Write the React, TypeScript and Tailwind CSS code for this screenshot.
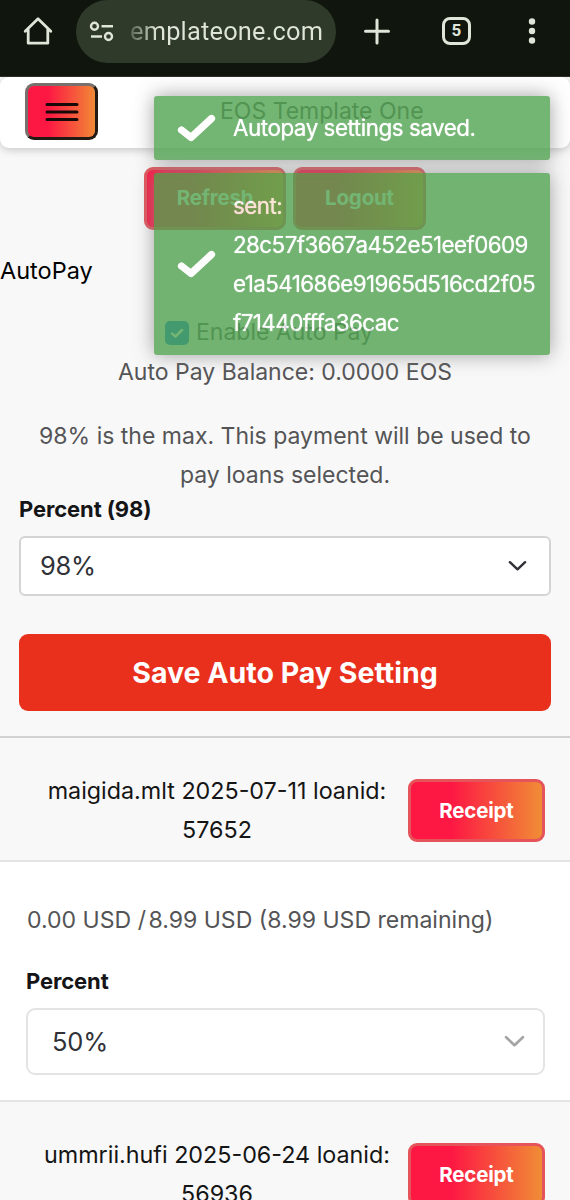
import type { ReactNode } from "react";
import clsx from "clsx";

type Loan = {
  account: string;
  date: string;
  loanId: string;
};

const loans: Loan[] = [
  { account: "maigida.mlt", date: "2025-07-11", loanId: "57652" },
  { account: "ummrii.hufi", date: "2025-06-24", loanId: "56936" },
];

function BrowserBar() {
  return (
    <div className="flex h-[77px] shrink-0 items-start border-b border-[#332e29] bg-[#10150d] text-[#dfe5d8]">
      <svg className="mt-[15px] ml-[22px] size-8 shrink-0" viewBox="0 0 32 32" fill="none" stroke="currentColor" strokeWidth="2.8" strokeLinecap="round" strokeLinejoin="round">
        <path d="M3.200 16.200 16 3.800 28.800 16.200M6.200 14v14.200h19.600V14" />
      </svg>
      <div className="ml-[22px] flex h-[63px] w-[260px] shrink-0 items-center rounded-[32px] bg-[#2f3a2b]">
        <svg className="ml-3 h-6 w-7 shrink-0" viewBox="0 0 28 24" fill="none" stroke="currentColor" strokeWidth="2.4">
          <circle cx="6.500" cy="6.300" r="3.500" />
          <path d="M13.500 6.300H25M3 16.500H14" />
          <circle cx="20.500" cy="16.500" r="3.500" />
        </svg>
        <span className="ml-[14px] whitespace-nowrap bg-linear-to-r from-[#5b6555] to-[#dfe5d8] to-[14%] bg-clip-text font-['Roboto',sans-serif] text-[25.400px] tracking-[0.200px] text-transparent">
          emplateone.com
        </span>
      </div>
      <svg className="mt-[17px] ml-[27px] size-7 shrink-0" viewBox="0 0 28 28" fill="none" stroke="currentColor" strokeWidth="3" strokeLinecap="round">
        <path d="M14 3v23M2.500 14.200h23" />
      </svg>
      <div className="mt-[17px] ml-[51px] flex h-[28px] w-[29px] shrink-0 items-center justify-center rounded-[8px] border-[3px] border-[#dfe5d8] font-['Roboto',sans-serif] text-[17px] font-bold">
        5
      </div>
      <svg className="mt-[17px] ml-[57px] h-7 w-2 shrink-0" viewBox="0 0 8 28" fill="currentColor">
        <circle cx="4" cy="4.500" r="3.200" />
        <circle cx="4" cy="14" r="3.200" />
        <circle cx="4" cy="23.500" r="3.200" />
      </svg>
    </div>
  );
}

function GradientButton({ children, className }: { children: ReactNode; className?: string }) {
  return (
    <button
      className={clsx(
        "h-[63px] shrink-0 rounded-[9px] border-[3px] border-[#e4545a] bg-linear-to-r/srgb from-[#fd1843] from-32% to-[#f09035] bg-origin-border text-[20.500px] font-bold tracking-[-0.200px] text-white",
        className,
      )}
    >
      {children}
    </button>
  );
}

function Chevron({ className }: { className?: string }) {
  return (
    <svg className={className} viewBox="0 0 20 12" fill="none" stroke="currentColor" strokeWidth="2.6" strokeLinecap="round" strokeLinejoin="round">
      <path d="M2 2l8 7.500L18 2" />
    </svg>
  );
}

function Toast({ children, className }: { children: ReactNode; className?: string }) {
  return (
    <div
      className={clsx(
        "flex w-[396px] items-center rounded-[3px] bg-[#51a351] pl-[22px] text-[22.400px] leading-[39.200px] text-white opacity-80 shadow-[0_0_20px_#888]",
        className,
      )}
    >
      <svg className="mr-[17px] h-[31px] w-10 shrink-0" viewBox="0 0 40 31" fill="none" stroke="#fff" strokeWidth="7.200" strokeLinecap="round" strokeLinejoin="round">
        <path d="M5.500 17 15 24.500 35.500 5.500" />
      </svg>
      <div className="shrink-0 whitespace-nowrap [text-shadow:0_0_1px_#fff]">{children}</div>
    </div>
  );
}

function LoanHeader({ loan }: { loan: Loan }) {
  return (
    <div className="flex h-[124px] items-start border-b-2 border-[#e4e4e5] bg-[#f8f8f8] pr-[25px]">
      <p className="mt-[33px] ml-[26px] w-[382px] text-center text-[23.300px] leading-[39px] text-[#151515]">
        {loan.account} {loan.date} loanid:
        <br />
        {loan.loanId}
      </p>
      <GradientButton className="mt-[41px] w-[137px]">Receipt</GradientButton>
    </div>
  );
}

export default function App() {
  return (
    <div className="relative flex h-[1200px] w-[570px] flex-col overflow-hidden bg-[#f8f8f8] font-['Inter',sans-serif] text-[23px] text-[#545456]">
      <BrowserBar />

      <header className="flex h-[71px] shrink-0 items-start rounded-[9px] bg-white shadow-[0_2px_8px_rgba(0,0,0,0.2)]">
        <button className="mt-[6px] ml-[25px] flex h-[57px] w-[73px] shrink-0 items-center justify-center rounded-[9px] border-[3px] border-t-[#77706c] border-r-[#241a14] border-b-[#241a14] border-l-[#77706c] bg-linear-to-r/srgb from-[#fd1843] from-32% to-[#f09035] bg-origin-border text-[#180808]">
          <svg className="h-5 w-[34px]" viewBox="0 0 34 20" stroke="currentColor" strokeWidth="3" strokeLinecap="round">
            <path d="M2 2.500h30M2 10h30M2 17.500h30" />
          </svg>
        </button>
        <h1 className="mt-[14px] ml-[122px] whitespace-nowrap text-[23px] leading-[40px]">EOS Template One</h1>
      </header>

      <div className="mt-[19px] flex shrink-0 justify-center gap-[7px]">
        <GradientButton className="w-[142px]">Refresh</GradientButton>
        <GradientButton className="w-[133px]">Logout</GradientButton>
      </div>

      <section className="shrink-0">
        <h2 className="mt-[21px] text-[23.500px] leading-[39px] text-black">AutoPay</h2>
        <label className="mt-[23px] ml-[165px] flex h-[39px] items-center">
          <span className="flex size-6 items-center justify-center rounded-[5px] bg-[#0d76e8]">
            <svg className="size-[16px]" viewBox="0 0 16 16" fill="none" stroke="#fff" strokeWidth="2.500" strokeLinecap="round" strokeLinejoin="round">
              <path d="M3 8.500 6.500 11.500 13 5" />
            </svg>
          </span>
          <span className="ml-[7px]">Enable Auto Pay</span>
        </label>
        <p className="mt-px text-center leading-[39px]">Auto Pay Balance: 0.0000 EOS</p>
        <p className="mt-[25px] text-center leading-[39.200px]">
          98% is the max. This payment will be used to
          <br />
          pay loans selected.
        </p>
        <div className="mx-[19px]">
          <p className="text-[22px] leading-[28px] font-bold tracking-[-0.120px] text-[#151517]">Percent (98)</p>
          <div className="mt-[13px] flex h-[60px] items-center justify-between rounded-[6px] border-2 border-[#d3d4d6] bg-white pr-[22px] pl-[19px] text-[25.500px] tracking-[-0.300px] text-[#303238]">
            98%
            <Chevron className="h-[12px] w-[19px]" />
          </div>
          <button className="mt-[38px] h-[77px] w-full rounded-[9px] bg-[#e9301d] text-[28.500px] font-bold text-white">
            Save Auto Pay Setting
          </button>
        </div>
      </section>

      <section className="mt-[25px] shrink-0 border-t-2 border-[#d2d2d4]">
        <LoanHeader loan={loans[0]} />
        <div className="h-[240px] border-b-2 border-[#e4e4e5] bg-white px-[26px] pt-[39px]">
          <p className="ml-px text-[23.060px] leading-[39px]">
            0.00 USD <span className="-mr-1">/</span> 8.99 USD (8.99 USD remaining)
          </p>
          <p className="mt-[27px] text-[22px] leading-[28px] font-bold tracking-[-0.120px] text-[#151517]">Percent</p>
          <div className="mt-[13px] flex h-[67px] w-[519px] items-center justify-between rounded-[9px] border-2 border-[#e4e4e4] bg-white pr-[18px] pl-[24px] text-[25.500px] tracking-[-0.200px] text-[#303238]">
            50%
            <Chevron className="h-[13px] w-[21px] text-[#a5a5a5]" />
          </div>
        </div>
        <LoanHeader loan={loans[1]} />
      </section>

      <div className="absolute top-[96px] left-[154px] flex flex-col gap-[13px]">
        <Toast className="h-[64px] tracking-[-0.460px]">Autopay settings saved.</Toast>
        <Toast className="h-[182px] tracking-[-0.570px]">
          sent:
          <br />
          28c57f3667a452e51eef0609
          <br />
          e1a541686e91965d516cd2f05
          <br />
          f71440fffa36cac
        </Toast>
      </div>
    </div>
  );
}
